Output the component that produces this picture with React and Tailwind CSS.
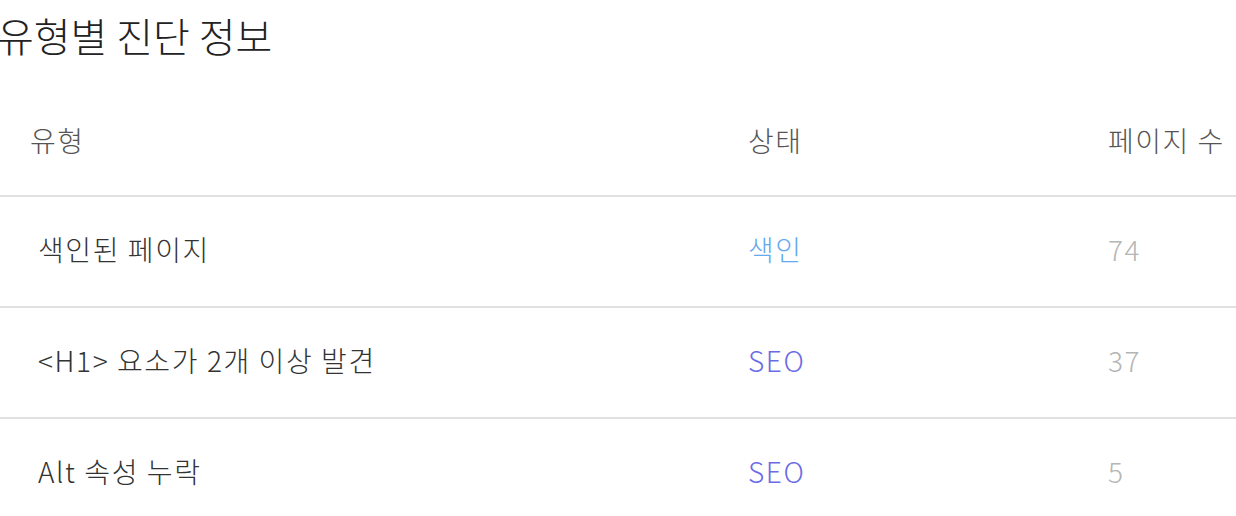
const rows = [
  { name: '색인된 페이지', status: '색인', statusColor: 'text-[#63a8f0]', count: 74 },
  { name: '<H1> 요소가 2개 이상 발견', status: 'SEO', statusColor: 'text-[#6b6be6]', count: 37 },
  { name: 'Alt 속성 누락', status: 'SEO', statusColor: 'text-[#6b6be6]', count: 5 },
]

function App() {
  return (
    <div
      className="w-[1236px] h-[516px] overflow-hidden bg-white"
      style={{ fontFamily: '"Noto Sans CJK KR", "Noto Sans", sans-serif' }}
    >
      <h2 className="h-[85px] pt-[6px] text-[40px] leading-[58px] font-light text-[#222] -ml-[3px]">
        유형별 진단 정보
      </h2>

      <div className="grid grid-cols-[748px_360px_1fr] h-[112px] items-center text-[28px] font-light tracking-[1.5px] text-[#555] border-b-2 border-[#e0e0e0]">
        <div className="pl-[30px]">유형</div>
        <div>상태</div>
        <div>페이지 수</div>
      </div>

      {rows.map((r) => (
        <div
          key={r.name}
          className="grid grid-cols-[748px_360px_1fr] h-[111px] pb-[5px] items-center text-[28px] font-light tracking-[1.6px] border-b-2 border-[#e0e0e0]"
        >
          <div className="pl-[38px] text-[#333]">{r.name}</div>
          <div className={r.statusColor}>{r.status}</div>
          <div className="text-[#b5b5b5]">{r.count}</div>
        </div>
      ))}
    </div>
  )
}

export default App
